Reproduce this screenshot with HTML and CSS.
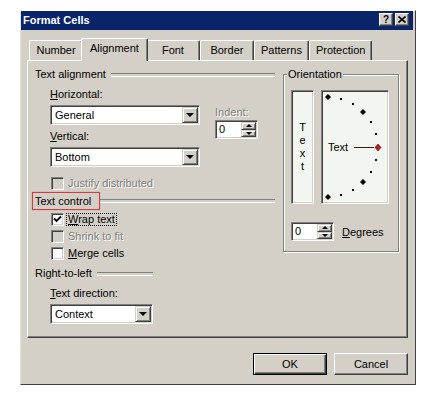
FILE: index.html
```html
<!DOCTYPE html>
<html lang="en">
<head>
  <meta charset="UTF-8">
  <title>Format Cells</title>
  <link rel="stylesheet" href="styles.css">
</head>
<body>
  <div class="dialog">
    <div class="titlebar">
      <span class="title">Format Cells</span>
      <div class="caption-btns">
        <span class="cap-btn">?</span>
        <span class="cap-btn">
          <svg width="8" height="7" viewBox="0 0 8 7"><path d="M0.5 0.5 L7.5 6.5 M7.5 0.5 L0.5 6.5" stroke="#000" stroke-width="1.6"/></svg>
        </span>
      </div>
    </div>

    <div class="dialog-body">
      <div class="tabs">
        <div class="tab">Number</div>
        <div class="tab active">Alignment</div>
        <div class="tab">Font</div>
        <div class="tab">Border</div>
        <div class="tab">Patterns</div>
        <div class="tab">Protection</div>
      </div>

      <div class="panel">
        <div class="col-left">
          <div class="group-head"><span>Text alignment</span></div>
          <div class="align-row">
            <div class="align-fields">
              <span class="field-label first"><u>H</u>orizontal:</span>
              <div class="select">
                <span class="select-text">General</span>
                <span class="drop-btn"><i class="arrow-down"></i></span>
              </div>
              <span class="field-label"><u>V</u>ertical:</span>
              <div class="select">
                <span class="select-text">Bottom</span>
                <span class="drop-btn"><i class="arrow-down"></i></span>
              </div>
            </div>
            <div class="indent">
              <span class="field-label disabled">Indent:</span>
              <div class="spinner">
                <span class="spin-value">0</span>
                <span class="spin-btns">
                  <span><i class="arrow-up small"></i></span>
                  <span><i class="arrow-down small"></i></span>
                </span>
              </div>
            </div>
          </div>

          <div class="check-row justify">
            <span class="checkbox off"></span>
            <span class="check-label disabled">Justify distributed</span>
          </div>

          <div class="group-head marked"><span class="head-text">Text control</span></div>
          <div class="check-row wrap">
            <span class="checkbox">
              <svg width="9" height="9" viewBox="0 0 9 9"><path d="M1 3.5 L3.5 6 L8 1.5" fill="none" stroke="#000" stroke-width="1.8"/></svg>
            </span>
            <span class="check-label focus"><u>W</u>rap text</span>
          </div>
          <div class="check-row">
            <span class="checkbox off"></span>
            <span class="check-label disabled">Shrink to fit</span>
          </div>
          <div class="check-row">
            <span class="checkbox"></span>
            <span class="check-label"><u>M</u>erge cells</span>
          </div>

          <div class="group-head short rtl"><span>Right-to-left</span></div>
          <span class="field-label direction"><u>T</u>ext direction:</span>
          <div class="select context">
            <span class="select-text">Context</span>
            <span class="drop-btn"><i class="arrow-down"></i></span>
          </div>
        </div>

        <fieldset class="orientation">
          <legend>Orientation</legend>
          <div class="orient-boxes">
            <div class="vtext">
              <span>T</span><span>e</span><span>x</span><span>t</span>
            </div>
            <div class="dial">
              <svg width="66" height="112" viewBox="0 0 66 112">
                <g fill="#000">
                  <polygon points="6,3 9,6 6,9 3,6"/>
                  <polygon points="41,18 44,21 41,24 38,21"/>
                  <polygon points="41,88 44,91 41,94 38,91"/>
                  <polygon points="6,103 9,106 6,109 3,106"/>
                  <rect x="18" y="7" width="2" height="2"/>
                  <rect x="30" y="12" width="2" height="2"/>
                  <rect x="48" y="30" width="2" height="2"/>
                  <rect x="53" y="42" width="2" height="2"/>
                  <rect x="53" y="68" width="2" height="2"/>
                  <rect x="48" y="80" width="2" height="2"/>
                  <rect x="30" y="98" width="2" height="2"/>
                  <rect x="18" y="103" width="2" height="2"/>
                </g>
                <text class="dial-text" x="6" y="60">Text</text>
                <path d="M32 56.5 H52" stroke="#3a1616" stroke-width="1"/>
                <polygon points="56,53 59,56.5 56,60 53,56.5" fill="#c01818" stroke="#5a0a0a" stroke-width="0.6"/>
              </svg>
            </div>
          </div>
          <div class="degrees">
            <div class="spinner">
              <span class="spin-value">0</span>
              <span class="spin-btns">
                <span><i class="arrow-up small"></i></span>
                <span><i class="arrow-down small"></i></span>
              </span>
            </div>
            <span><u>D</u>egrees</span>
          </div>
        </fieldset>
      </div>

      <div class="buttons">
        <div class="btn default">OK</div>
        <div class="btn">Cancel</div>
      </div>
    </div>
  </div>
</body>
</html>
```

FILE: styles.css
```css
* {
  box-sizing: border-box;
}

body {
  margin: 0;
  background: #fff;
  font-family: "Liberation Sans", Arial, sans-serif;
  font-size: 11px;
  color: #000;
}

.dialog {
  width: 396px;
  height: 375px;
  margin: 10px 0 0 20px;
  background: #d4d0c8;
  border: 1px solid;
  border-color: #fff #404040 #404040 #e6e4de;
  padding-right: 2px;
  display: flex;
  flex-direction: column;
}

/* title bar */
.titlebar {
  height: 19px;
  background: #0a246a;
  color: #fff;
  display: flex;
  justify-content: space-between;
  padding: 0 4px 0 2px;
}

.title {
  font-weight: bold;
  line-height: 19px;
}

.caption-btns {
  display: flex;
  gap: 2px;
  margin-top: 2px;
}

.cap-btn {
  width: 14px;
  height: 13px;
  background: #d4d0c8;
  border: 1px solid;
  border-color: #fff #404040 #404040 #fff;
  box-shadow: inset -1px -1px #808080;
  display: flex;
  align-items: center;
  justify-content: center;
  color: #000;
  font-weight: bold;
  font-size: 10px;
  line-height: 10px;
}

.dialog-body {
  flex: 1;
  padding: 8px 5px 9px 6px;
  display: flex;
  flex-direction: column;
}

/* tabs */
.tabs {
  display: flex;
  align-items: flex-end;
  height: 22px;
  padding-left: 2px;
}

.tab {
  height: 20px;
  min-width: 54px;
  padding: 0 6px;
  line-height: 19px;
  text-align: center;
  border: 1px solid;
  border-bottom: 0;
  border-color: #fff #404040 transparent #fff;
  box-shadow: inset -1px 0 #808080;
  border-radius: 2px 2px 0 0;
}

.tab.active {
  height: 23px;
  margin: 0 -2px -1px;
  padding: 0 8px 3px;
  position: relative;
  z-index: 1;
  background: #d4d0c8;
}

/* panel */
.panel {
  height: 278px;
  border: 1px solid;
  border-color: #fff #404040 #404040 #fff;
  box-shadow: inset -1px -1px #808080;
  padding: 7px 8px 0 7px;
  display: grid;
  grid-template-columns: 240px 116px;
  column-gap: 8px;
  align-items: start;
}

.group-head {
  display: flex;
  align-items: center;
  gap: 5px;
  line-height: 13px;
}

.group-head::after {
  content: "";
  flex: 1;
  height: 2px;
  border-top: 1px solid #808080;
  border-bottom: 1px solid #fff;
}

.group-head.short {
  width: 118px;
}

.group-head.marked {
  gap: 0;
  margin-top: 2px;
}

.marked .head-text {
  border: 1px solid #d43c3c;
  box-shadow: 0 0 1px rgba(220, 70, 70, 0.6);
  padding: 2px 8px 1px 2px;
  margin-left: -3px;
}

.group-head.rtl {
  margin-top: 7px;
}

.field-label {
  display: block;
  line-height: 13px;
  margin-top: 5px;
  margin-bottom: 4px;
}

.field-label.first {
  margin-top: 7px;
}

.field-label.direction {
  margin: 7px 0 4px 15px;
}

.disabled {
  color: #808080;
  text-shadow: 1px 1px 0 #fff;
}

.align-row {
  display: flex;
  padding-left: 15px;
}

.align-fields {
  width: 150px;
}

.indent {
  margin-left: 15px;
  padding-top: 25px;
}

.indent .field-label {
  margin: 0 0 1px;
}

/* combo boxes */
.select {
  display: flex;
  height: 20px;
  background: #fff;
  border: 1px solid;
  border-color: #808080 #fff #fff #808080;
  box-shadow: inset 1px 1px #404040, inset -1px -1px #d4d0c8;
  padding: 1px;
}

.select.context {
  width: 103px;
  margin-left: 15px;
}

.select-text {
  flex: 1;
  line-height: 16px;
  padding-left: 3px;
}

.drop-btn {
  width: 16px;
  background: #d4d0c8;
  border: 1px solid;
  border-color: #d4d0c8 #404040 #404040 #d4d0c8;
  box-shadow: inset 1px 1px #fff, inset -1px -1px #808080;
  display: flex;
  align-items: center;
  justify-content: center;
}

.arrow-down {
  width: 0;
  height: 0;
  border-left: 4px solid transparent;
  border-right: 4px solid transparent;
  border-top: 4px solid #000;
}

.arrow-up {
  width: 0;
  height: 0;
  border-left: 4px solid transparent;
  border-right: 4px solid transparent;
  border-bottom: 4px solid #000;
}

.arrow-down.small {
  border-width: 3px 3px 0;
}

.arrow-up.small {
  border-width: 0 3px 3px;
}

/* spinners */
.spinner {
  display: flex;
  width: 43px;
  height: 19px;
  background: #fff;
  border: 1px solid;
  border-color: #808080 #fff #fff #808080;
  box-shadow: inset 1px 1px #404040, inset -1px -1px #d4d0c8;
  padding: 1px;
}

.spin-value {
  flex: 1;
  line-height: 15px;
  padding-left: 2px;
}

.spin-btns {
  width: 15px;
  display: flex;
  flex-direction: column;
}

.spin-btns span {
  flex: 1;
  background: #d4d0c8;
  border: 1px solid;
  border-color: #d4d0c8 #404040 #404040 #d4d0c8;
  box-shadow: inset 1px 1px #fff, inset -1px -1px #808080;
  display: flex;
  align-items: center;
  justify-content: center;
}

/* check boxes */
.check-row {
  display: flex;
  align-items: center;
  height: 13px;
  margin: 4px 0 0 16px;
}

.check-row.justify {
  margin-top: 10px;
}

.check-row.wrap {
  margin-top: 3px;
}

.checkbox {
  width: 13px;
  height: 13px;
  background: #fff;
  border: 1px solid;
  border-color: #808080 #fff #fff #808080;
  box-shadow: inset 1px 1px #404040, inset -1px -1px #d4d0c8;
  display: flex;
  align-items: center;
  justify-content: center;
}

.checkbox.off {
  background: #d4d0c8;
}

.check-label {
  margin-left: 2px;
  padding: 0 1px;
  border: 1px dotted transparent;
  line-height: 11px;
}

.check-label.focus {
  border-color: #000;
}

/* orientation */
.orientation {
  margin: 0;
  min-width: 0;
  padding: 9px 0 10px 7px;
  border: 1px solid #808080;
  box-shadow: inset 1px 1px #fff, 1px 1px #fff;
}

.orientation legend {
  padding: 0 1px;
  margin-left: -4px;
  line-height: 13px;
  background: #d4d0c8;
}

.orient-boxes {
  display: flex;
  gap: 7px;
  height: 114px;
}

.vtext,
.dial {
  background: #f3f5f0;
  border: 1px solid;
  border-color: #808080 #fff #fff #808080;
  box-shadow: inset 1px 1px #404040, inset -1px -1px #d4d0c8;
}

.vtext {
  width: 23px;
  display: flex;
  flex-direction: column;
  align-items: center;
  justify-content: center;
  line-height: 13px;
}

.dial {
  width: 68px;
}

.dial svg {
  display: block;
}

.dial-text {
  font-family: "Liberation Sans", Arial, sans-serif;
  font-size: 11px;
}

.degrees {
  display: flex;
  align-items: center;
  gap: 8px;
  margin-top: 18px;
}

/* buttons */
.buttons {
  display: flex;
  justify-content: flex-end;
  gap: 7px;
  margin-top: 15px;
}

.btn {
  width: 74px;
  height: 22px;
  line-height: 20px;
  text-align: center;
  border: 1px solid;
  border-color: #fff #404040 #404040 #fff;
  box-shadow: inset -1px -1px #808080;
}

.btn.default {
  border-color: #000;
  box-shadow: inset 1px 1px #fff, inset -1px -1px #404040, inset -2px -2px #808080;
}
```
